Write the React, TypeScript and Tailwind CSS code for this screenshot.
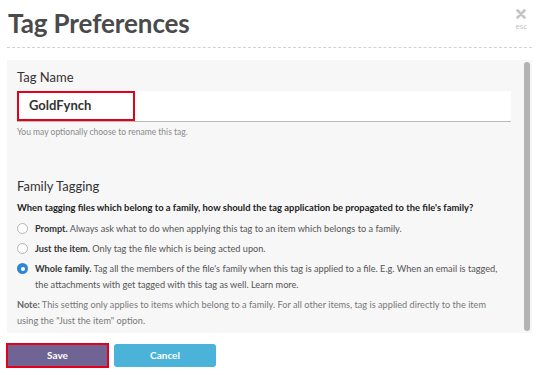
import React from "react"

const radios = [
  {
    label: "Prompt.",
    text: "Always ask what to do when applying this tag to an item which belongs to a family.",
    checked: false,
  },
  {
    label: "Just the item.",
    text: "Only tag the file which is being acted upon.",
    checked: false,
  },
  {
    label: "Whole family.",
    text: "Tag all the members of the file's family when this tag is applied to a file. E.g. When an email is tagged, the attachments with get tagged with this tag as well. Learn more.",
    checked: true,
  },
]

function Radio({ checked }: { checked: boolean }) {
  if (checked) {
    return (
      <span className="mt-[2px] flex h-[11px] w-[11px] shrink-0 items-center justify-center rounded-full bg-[#2f86d4]">
        <span className="h-[4px] w-[4px] rounded-full bg-white" />
      </span>
    )
  }
  return (
    <span className="mt-[2px] h-[11px] w-[11px] shrink-0 rounded-full border border-[#b5b5b5] bg-white" />
  )
}

export default function App() {
  return (
    <div className="relative h-[375px] w-[539px] overflow-hidden bg-white font-['Lato',sans-serif] text-[#333]">
      {/* Header */}
      <div className="flex items-start justify-between pl-[8px] pr-[12px]">
        <h1 className="mt-[5px] text-[26px] font-bold leading-[36px] tracking-[-0.1px] text-[#4a4a4a]">
          Tag Preferences
        </h1>
        <div className="mt-[9px] flex flex-col items-center text-[#c4c4c4]">
          <svg width="10" height="10" viewBox="0 0 10 10">
            <path d="M1.5 1.5 L8.5 8.5 M8.5 1.5 L1.5 8.5" stroke="currentColor" strokeWidth="2.6" strokeLinecap="round" />
          </svg>
          <span className="mt-[2px] text-[8px] leading-[10px]">esc</span>
        </div>
      </div>
      <div className="mx-[7px] mt-[6px] border-b border-dashed border-[#d2d2d2]" />

      {/* Panel */}
      <div className="mx-[7px] mt-[12px] flex h-[273px] bg-[#f7f7f7]">
        <div className="flex-1 pl-[10px] pr-[11px]">
          <div className="mt-[9px] text-[13px] leading-[16px] text-[#333]">Tag Name</div>
          <div className="mt-[6px] h-[31px] border-b border-[#b9b9b9] bg-white">
            <div className="flex h-[30px] w-[118px] items-center border-2 border-[#e3001b] pl-[10px] text-[13px] font-bold text-[#333]">
              GoldFynch
            </div>
          </div>
          <div className="mt-[4px] text-[8.5px] leading-[12px] text-[#8a8a8a]">
            You may optionally choose to rename this tag.
          </div>

          <div className="mt-[40px] text-[13px] leading-[16px] text-[#333]">Family Tagging</div>
          <div className="mt-[7px] whitespace-nowrap text-[9.4px] font-bold leading-[14px] text-[#222]">
            When tagging files which belong to a family, how should the tag application be propagated to the file's family?
          </div>
          <div className="mt-[6px] flex flex-col gap-[4px]">
            {radios.map((r) => (
              <div key={r.label} className="flex gap-[7px] text-[9.2px] leading-[16px] text-[#555]">
                <Radio checked={r.checked} />
                <p className="pr-[6px]">
                  <span className="font-bold text-[#333]">{r.label}</span> {r.text}
                </p>
              </div>
            ))}
          </div>
          <p className="mt-[4px] pr-[6px] text-[9.2px] leading-[16px] text-[#777]">
            <span className="font-bold text-[#666]">Note:</span> This setting only applies to items which belong to a family. For all other items, tag is applied directly to the item using the "Just the item" option.
          </p>
        </div>
        <div className="flex w-[10px] justify-center py-[2px]">
          <div className="w-[6px] rounded-full bg-[#b3b3b3]" />
        </div>
      </div>

      {/* Buttons */}
      <div className="mt-[10px] flex items-center gap-[5px] pl-[6px]">
        <button className="flex h-[25px] w-[103px] items-center justify-center border-2 border-[#e3001b] bg-[#6f6494] text-[10px] font-bold text-white">
          Save
        </button>
        <button className="flex h-[23px] w-[102px] items-center justify-center rounded-[3px] bg-[#4bb2d9] text-[10px] font-bold text-white">
          Cancel
        </button>
      </div>
    </div>
  )
}
